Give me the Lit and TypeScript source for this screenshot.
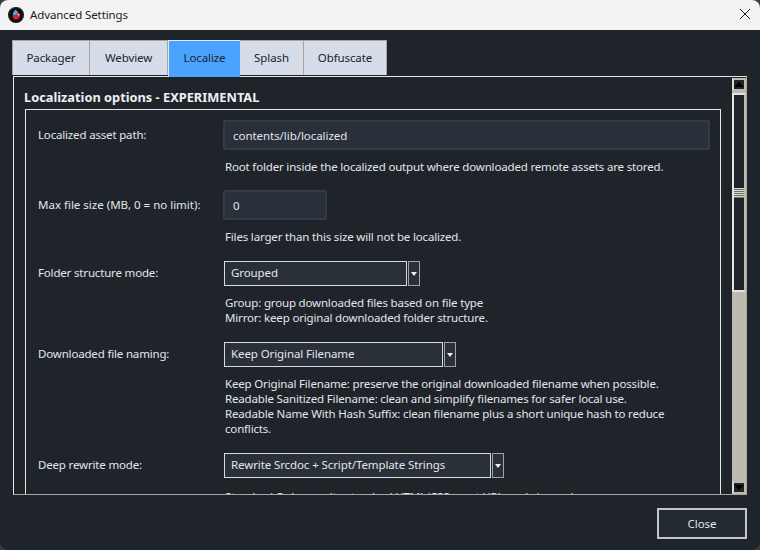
import { LitElement, html, css } from "lit";
import { customElement } from "lit/decorators.js";

const TABS = [
  { label: "Packager", width: 78 },
  { label: "Webview", width: 78 },
  { label: "Localize", width: 72, active: true },
  { label: "Splash", width: 64 },
  { label: "Obfuscate", width: 83 },
];

@customElement("app-root")
export class AppRoot extends LitElement {
  static styles = css`
    :host {
      display: block;
      width: 760px;
      height: 550px;
      background: #3a3d42;
      font-family: "Noto Sans", "Open Sans", sans-serif;
      font-size: 11.5px;
      color: #e2e6ea;
    }
    .window {
      width: 760px;
      height: 550px;
      border-radius: 8px;
      overflow: hidden;
      background: #1f242b;
      display: flex;
      flex-direction: column;
    }
    .titlebar {
      height: 30px;
      flex: none;
      box-sizing: border-box;
      padding: 0 9px 2px 8px;
      background: #f3f3f3;
      color: #1b1b1b;
      display: flex;
      align-items: center;
      gap: 6px;
      font-size: 11.5px;
      letter-spacing: -0.1px;
    }
    .titlebar .name { flex: 1; }
    .logo, .x { display: block; flex: none; }
    .logo { margin-top: 2px; }
    .body {
      flex: 1;
      display: flex;
      flex-direction: column;
      padding: 10px 13px 11px 12px;
      min-height: 0;
    }
    .tabs {
      display: flex;
      height: 36px;
      flex: none;
    }
    .tab {
      box-sizing: border-box;
      height: 35px;
      padding-bottom: 2px;
      background: #d6dce8;
      color: #20242a;
      border: 1px solid #a8a59b;
      border-bottom: none;
      display: flex;
      align-items: center;
      justify-content: center;
      font-size: 11.5px;
      letter-spacing: -0.1px;
    }
    .tab + .tab { border-left: none; }
    .tab.active {
      height: 37px;
      padding-bottom: 4px;
      background: #4aa3ff;
      border: none;
      border-top: 1px solid #dcecff;
      border-left: 1px solid #dcecff;
      position: relative;
      z-index: 1;
    }
    .pane {
      flex: 1;
      min-height: 0;
      margin-left: 1px;
      border: 1px solid #e6e6e6;
      border-right-color: #a8a59b;
      border-bottom-color: #a8a59b;
      display: flex;
    }
    .scroll {
      flex: 1;
      min-width: 0;
      overflow: hidden;
      padding: 10px 11px 0 10px;
      display: flex;
      flex-direction: column;
    }
    .heading {
      font-weight: 700;
      font-size: 12.8px;
      line-height: 20px;
      height: 22px;
      flex: none;
      color: #eef0f2;
      white-space: nowrap;
    }
    .group {
      flex: none;
      margin-left: 1px;
      border: 1px solid #e6e6e6;
      padding: 10px 10px 40px 12px;
      display: grid;
      grid-template-columns: 185px 1fr;
      align-items: start;
    }
    .label {
      height: 30px;
      line-height: 30px;
      white-space: nowrap;
      letter-spacing: -0.17px;
    }
    .label.wide { letter-spacing: 0; }
    .label.sel { height: 25px; line-height: 23px; }
    .field { display: flex; flex-direction: column; }
    .input {
      box-sizing: border-box;
      height: 30px;
      background: #2a303a;
      border: 2px solid #343b47;
      border-radius: 2px;
      padding: 0 8px;
      line-height: 28px;
      letter-spacing: -0.05px;
    }
    .w-small { width: 104px; }
    .select-row {
      display: flex;
      gap: 1px;
      height: 25px;
      margin-left: 1px;
    }
    .select {
      box-sizing: border-box;
      height: 25px;
      background: #2a303a;
      border: 1px solid #d8dadc;
      padding: 0 6px;
      line-height: 21px;
      white-space: nowrap;
      letter-spacing: -0.1px;
    }
    .arrow {
      box-sizing: border-box;
      width: 12px;
      height: 25px;
      background: #2a303a;
      border: 1px solid #a0a2a6;
      display: flex;
      align-items: center;
      justify-content: center;
    }
    .arrow::after {
      content: "";
      border-left: 3.5px solid transparent;
      border-right: 3.5px solid transparent;
      border-top: 4px solid #f2f2f2;
    }
    .help {
      margin: 9px 0 16px 2px;
      line-height: 15px;
      letter-spacing: -0.17px;
    }
    .help.tight { margin-bottom: 17px; }
    .help.last { margin-top: 11px; }
    .scrollbar {
      flex: none;
      width: 14px;
      margin-top: 1px;
      display: flex;
      flex-direction: column;
      background: #bdbab0;
    }
    .sbtn {
      box-sizing: border-box;
      height: 13px;
      flex: none;
      background: #1f242b;
      border: 2px solid #bdbab0;
      border-left-color: #d8d8d4;
      display: flex;
      align-items: center;
      justify-content: center;
    }
    .sbtn.up::after {
      content: "";
      border-left: 5px solid transparent;
      border-right: 5px solid transparent;
      border-bottom: 5px solid #000;
    }
    .sbtn.down::after {
      content: "";
      border-left: 5px solid transparent;
      border-right: 5px solid transparent;
      border-top: 5px solid #000;
    }
    .thumb {
      box-sizing: border-box;
      height: 199px;
      margin-top: 2px;
      flex: none;
      background: #1f242b;
      border: 2px solid #e4e4e0;
      border-right-color: #bdbab0;
      display: flex;
      align-items: center;
      justify-content: center;
    }
    .grip {
      width: 100%;
      height: 10px;
      background: repeating-linear-gradient(to bottom, #d8d8d0 0 1px, #6f7068 1px 2px);
    }
    .track { flex: 1; }
    .footer {
      flex: none;
      display: flex;
      justify-content: flex-end;
      padding-top: 13px;
    }
    .close {
      box-sizing: border-box;
      width: 90px;
      height: 31px;
      background: #242a32;
      border: 2px solid #c2c5c8;
      color: #dfe8f4;
      display: flex;
      align-items: center;
      justify-content: center;
      font-size: 11.5px;
    }
  `;

  private selectRow(value: string, width: number) {
    return html`<div class="select-row">
      <div class="select" style="width:${width}px">${value}</div>
      <div class="arrow"></div>
    </div>`;
  }

  render() {
    return html`<div class="window">
      <div class="titlebar">
        <svg class="logo" width="16" height="16" viewBox="0 0 16 16">
          <circle cx="8" cy="8" r="8" fill="#0c0c0e" />
          <circle cx="8" cy="8" r="7.2" fill="none" stroke="#55565a" stroke-width="0.8" stroke-dasharray="1.5 1.5" />
          <path d="M5 6 L7.5 2.5 L10 5 L9 8 L5 9 Z" fill="#35b4e6" />
          <path d="M4.5 8.5 L8 7.5 L10 6 L12.5 8 L11 11.5 L7.5 13 L5 11 Z" fill="#e0202c" />
          <circle cx="10.5" cy="7.5" r="0.9" fill="#f5c6c6" />
        </svg>
        <span class="name">Advanced Settings</span>
        <svg class="x" width="12" height="12" viewBox="0 0 12 12">
          <path d="M1 1 L11 11 M11 1 L1 11" stroke="#1b1b1b" stroke-width="1" fill="none" />
        </svg>
      </div>
      <div class="body">
        <div class="tabs">
          ${TABS.map(
            (t) => html`<div class="tab ${t.active ? "active" : ""}" style="width:${t.width}px">${t.label}</div>`
          )}
        </div>
        <div class="pane">
          <div class="scroll">
            <div class="heading">Localization options - EXPERIMENTAL</div>
            <div class="group">
              <div class="label">Localized asset path:</div>
              <div class="field">
                <div class="input">contents/lib/localized</div>
                <div class="help">Root folder inside the localized output where downloaded remote assets are stored.</div>
              </div>

              <div class="label wide">Max file size (MB, 0 = no limit):</div>
              <div class="field">
                <div class="input w-small">0</div>
                <div class="help tight">Files larger than this size will not be localized.</div>
              </div>

              <div class="label sel">Folder structure mode:</div>
              <div class="field">
                ${this.selectRow("Grouped", 183)}
                <div class="help tight">Group: group downloaded files based on file type<br />Mirror: keep original downloaded folder structure.</div>
              </div>

              <div class="label sel">Downloaded file naming:</div>
              <div class="field">
                ${this.selectRow("Keep Original Filename", 219)}
                <div class="help tight">Keep Original Filename: preserve the original downloaded filename when possible.<br />Readable Sanitized Filename: clean and simplify filenames for safer local use.<br />Readable Name With Hash Suffix: clean filename plus a short unique hash to reduce<br />conflicts.</div>
              </div>

              <div class="label sel">Deep rewrite mode:</div>
              <div class="field">
                ${this.selectRow("Rewrite Srcdoc + Script/Template Strings", 267)}
                <div class="help last">Standard Only: rewrite standard HTML/CSS asset URLs only in markup.</div>
              </div>
            </div>
          </div>
          <div class="scrollbar">
            <div class="sbtn up"></div>
            <div class="thumb"><div class="grip"></div></div>
            <div class="track"></div>
            <div class="sbtn down"></div>
          </div>
        </div>
        <div class="footer"><div class="close">Close</div></div>
      </div>
    </div>`;
  }
}
